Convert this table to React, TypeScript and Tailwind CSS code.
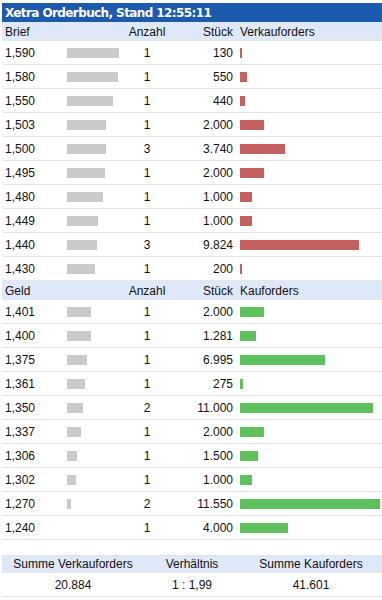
const asks = [
  { price: '1,590', n: 1, qty: 130 },
  { price: '1,580', n: 1, qty: 550 },
  { price: '1,550', n: 1, qty: 440 },
  { price: '1,503', n: 1, qty: 2000 },
  { price: '1,500', n: 3, qty: 3740 },
  { price: '1,495', n: 1, qty: 2000 },
  { price: '1,480', n: 1, qty: 1000 },
  { price: '1,449', n: 1, qty: 1000 },
  { price: '1,440', n: 3, qty: 9824 },
  { price: '1,430', n: 1, qty: 200 },
]

const bids = [
  { price: '1,401', n: 1, qty: 2000 },
  { price: '1,400', n: 1, qty: 1281 },
  { price: '1,375', n: 1, qty: 6995 },
  { price: '1,361', n: 1, qty: 275 },
  { price: '1,350', n: 2, qty: 11000 },
  { price: '1,337', n: 1, qty: 2000 },
  { price: '1,306', n: 1, qty: 1500 },
  { price: '1,302', n: 1, qty: 1000 },
  { price: '1,270', n: 2, qty: 11550 },
  { price: '1,240', n: 1, qty: 4000 },
]

const maxQty = 11550
const minPrice = 1.24
const maxPrice = 1.59

const fmtQty = (q: number) => q.toLocaleString('de-DE')

const cols = 'grid grid-cols-[62px_58px_50px_64px_1fr] items-center'

function Header({ left, right }: { left: string; right: string }) {
  return (
    <div className={`${cols} h-[19px] bg-[#dfe8f8] text-[#111]`}>
      <div className="pl-[3px]">{left}</div>
      <div />
      <div className="text-center">Anzahl</div>
      <div className="text-right pr-[3px]">Stück</div>
      <div className="pl-[4px]">{right}</div>
    </div>
  )
}

function Row({ row, color }: { row: typeof asks[0]; color: string }) {
  const p = parseFloat(row.price.replace(',', '.'))
  const grey = Math.round(((p - minPrice) / (maxPrice - minPrice)) * 52)
  const bar = Math.max(1, Math.round((row.qty / maxQty) * 140))
  return (
    <div className={`${cols} h-[24px] border-b border-[#e6e6e6] text-[#111]`}>
      <div className="pl-[3px]">{row.price}</div>
      <div className="pl-[3px] flex">
        {grey > 0 && <div className="h-[10px] bg-[#cacaca]" style={{ width: grey }} />}
      </div>
      <div className="text-center">{row.n}</div>
      <div className="text-right pr-[3px]">{fmtQty(row.qty)}</div>
      <div className="pl-[4px] flex">
        <div className={`h-[10px] ${color}`} style={{ width: bar }} />
      </div>
    </div>
  )
}

export default function App() {
  return (
    <div className="bg-white min-h-[600px] pt-[3px] pl-[2px] font-['Liberation_Sans',Arial,sans-serif] text-[12px] leading-none">
      <div className="w-[380px]">
        <div className="h-[19px] bg-[#1c5aae] text-white font-bold font-['DejaVu_Sans',sans-serif] text-[12px] tracking-[-0.6px] pl-[3px] flex items-center">
          Xetra Orderbuch, Stand 12:55:11
        </div>
        <Header left="Brief" right="Verkauforders" />
        {asks.map(r => (
          <Row key={r.price} row={r} color="bg-[#c46060]" />
        ))}
        <Header left="Geld" right="Kauforders" />
        {bids.map(r => (
          <Row key={r.price} row={r} color="bg-[#5ec15e]" />
        ))}

        <div className="mt-[15px] grid grid-cols-[142px_96px_142px] text-center text-[#111]">
          <div className="h-[18px] bg-[#dfe8f8] flex items-center justify-center">Summe Verkauforders</div>
          <div className="h-[18px] bg-[#dfe8f8] flex items-center justify-center">Verhältnis</div>
          <div className="h-[18px] bg-[#dfe8f8] flex items-center justify-center">Summe Kauforders</div>
          <div className="h-[24px] border-b border-[#e6e6e6] flex items-center justify-center">20.884</div>
          <div className="h-[24px] border-b border-[#e6e6e6] flex items-center justify-center">1 : 1,99</div>
          <div className="h-[24px] border-b border-[#e6e6e6] flex items-center justify-center">41.601</div>
        </div>
      </div>
    </div>
  )
}
